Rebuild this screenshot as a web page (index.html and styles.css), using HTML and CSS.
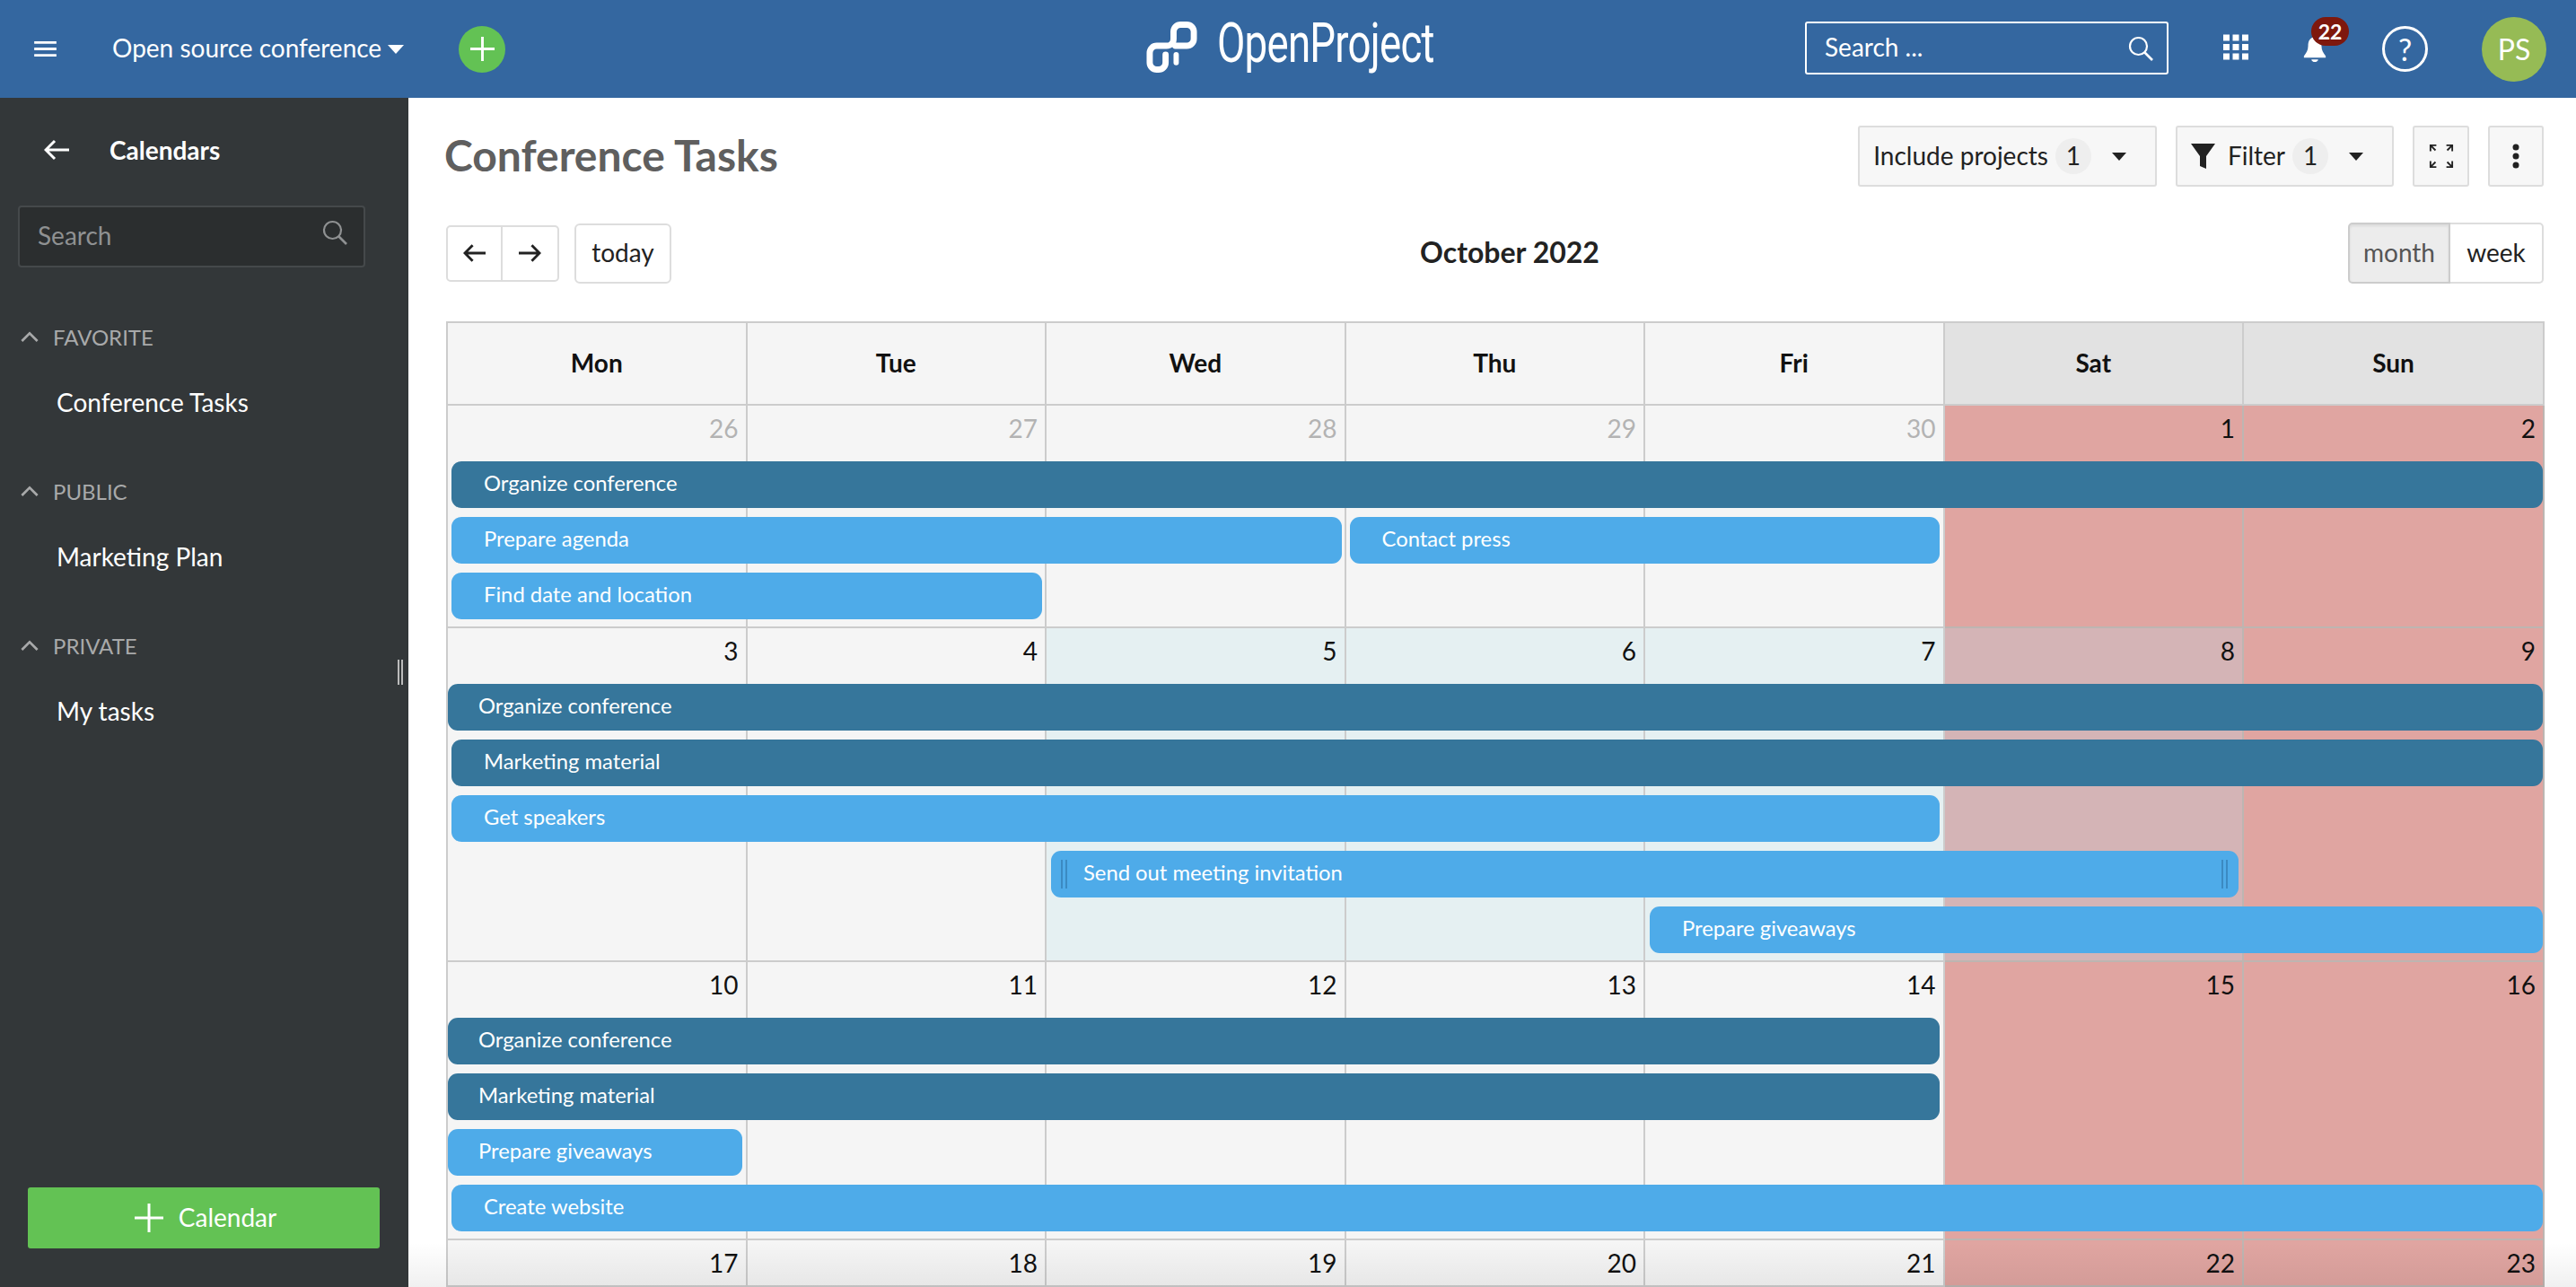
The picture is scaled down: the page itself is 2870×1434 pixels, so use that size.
FILE: index.html
```html
<!DOCTYPE html>
<html lang="en">
<head>
<meta charset="utf-8">
<title>Conference Tasks</title>
<link rel="stylesheet" href="styles.css">
</head>
<body>
<header class="topbar">
  <div class="top-left">
    <svg class="hamburger" viewBox="0 0 26 20"><path d="M0 2.500h26M0 10h26M0 17.500h26" stroke="#fff" stroke-width="3"/></svg>
    <span class="project">Open source conference</span>
    <span class="caret-white"></span>
    <span class="add-circle"><svg viewBox="0 0 30 30"><path d="M15 1v28M1 15h28" stroke="#fff" stroke-width="3"/></svg></span>
  </div>
  <div class="logo">
    <svg class="logo-mark" viewBox="0 0 58 59"><path d="M33 28H46a8 8 0 0 0 8-8V12a8 8 0 0 0-8-8h-7a8 8 0 0 0-8 8V20c0 5-3 8-8 8H12a8 8 0 0 0-8 8v11a8 8 0 0 0 8 8h2a8 8 0 0 0 8-8V38" fill="none" stroke="#fff" stroke-width="7" stroke-linecap="round"/><path d="M34 38v9" stroke="#fff" stroke-width="6" stroke-linecap="round"/></svg>
    <span class="logo-text">OpenProject</span>
  </div>
  <div class="top-right">
    <div class="global-search"><span>Search ...</span>
      <svg class="search-ico" viewBox="0 0 28 28"><circle cx="11.500" cy="11.500" r="9.500" fill="none" stroke="currentColor" stroke-width="2.200"/><path d="M18 18l9 9" stroke="currentColor" stroke-width="2.600"/></svg>
    </div>
    <svg class="grid-ico" viewBox="0 0 28 28"><path fill="#fff" d="M0 0h7v7H0zM10.500 0h7v7h-7zM21 0h7v7h-7zM0 10.500h7v7H0zM10.500 10.500h7v7h-7zM21 10.500h7v7h-7zM0 21h7v7H0zM10.500 21h7v7h-7zM21 21h7v7h-7z"/></svg>
    <div class="bell-wrap">
      <svg class="bell" viewBox="0 0 28 30"><path fill="#fff" d="M14 0c-6 1-8 5-8 11 0 5-2 8-5 12v2h26v-2c-3-4-5-7-5-12 0-6-2-10-8-11zM10 27h8c0 2-2 3-4 3s-4-1-4-3z"/></svg>
      <span class="badge">22</span>
    </div>
    <span class="help">?</span>
    <span class="avatar">PS</span>
  </div>
</header>
<div class="body-row">
  <aside class="sidebar">
    <div class="side-head">
      <svg class="back" viewBox="0 0 28 24"><path d="M12 2L2 12l10 10M2 12h26" fill="none" stroke="#fff" stroke-width="3"/></svg>
      <span class="side-title">Calendars</span>
    </div>
    <div class="side-search"><span>Search</span>
      <svg class="search-ico" viewBox="0 0 28 28"><circle cx="11.500" cy="11.500" r="9.500" fill="none" stroke="currentColor" stroke-width="2.200"/><path d="M18 18l9 9" stroke="currentColor" stroke-width="2.600"/></svg>
    </div>
    <div class="side-group">
      <div class="group-label"><svg class="chev" viewBox="0 0 22 14"><path d="M1.500 12L11 2.500 20.500 12" fill="none" stroke="currentColor" stroke-width="3"/></svg>FAVORITE</div>
      <div class="group-item">Conference Tasks</div>
    </div>
    <div class="side-group">
      <div class="group-label"><svg class="chev" viewBox="0 0 22 14"><path d="M1.500 12L11 2.500 20.500 12" fill="none" stroke="currentColor" stroke-width="3"/></svg>PUBLIC</div>
      <div class="group-item">Marketing Plan</div>
    </div>
    <div class="side-group">
      <div class="group-label"><svg class="chev" viewBox="0 0 22 14"><path d="M1.500 12L11 2.500 20.500 12" fill="none" stroke="currentColor" stroke-width="3"/></svg>PRIVATE</div>
      <div class="group-item">My tasks</div>
    </div>
    <span class="side-resize"></span>
    <div class="side-button"><svg viewBox="0 0 32 32"><path d="M16 0v32M0 16h32" stroke="#fff" stroke-width="3"/></svg><span>Calendar</span></div>
  </aside>
  <main class="main">
    <div class="title-row">
      <h1 class="page-title">Conference Tasks</h1>
      <div class="actions">
        <div class="btn"><span>Include projects</span><span class="count">1</span><span class="caret-dark"></span></div>
        <div class="btn"><svg class="funnel" viewBox="0 0 28 28"><path fill="#222" d="M0 0h27L17 14v14l-7-3V14z"/></svg><span>Filter</span><span class="count">1</span><span class="caret-dark"></span></div>
        <div class="btn square"><svg viewBox="0 0 30 30"><path d="M2 9V2h7M2 2l6 6M28 9V2h-7M28 2l-6 6M2 21v7h7M2 28l6-6M28 21v7h-7M28 28l-6-6" fill="none" stroke="#222" stroke-width="2"/></svg></div>
        <div class="btn square last"><svg class="kebab" viewBox="0 0 8 28"><circle cx="4" cy="4" r="3.500" fill="#222"/><circle cx="4" cy="14" r="3.500" fill="#222"/><circle cx="4" cy="24" r="3.500" fill="#222"/></svg></div>
      </div>
    </div>
    <div class="cal-toolbar">
      <div class="cal-left">
        <div class="btn-group">
          <div class="cal-btn"><svg viewBox="0 0 26 22"><path d="M11 2L2 11l9 9M2 11h24" fill="none" stroke="#222" stroke-width="3"/></svg></div>
          <div class="cal-btn"><svg viewBox="0 0 26 22"><path d="M15 2l9 9-9 9M24 11H0" fill="none" stroke="#222" stroke-width="3"/></svg></div>
        </div>
        <div class="cal-btn today">today</div>
      </div>
      <h2 class="cal-title">October 2022</h2>
      <div class="btn-group view">
        <div class="cal-btn active">month</div>
        <div class="cal-btn week-btn">week</div>
      </div>
    </div>
    <div class="calendar">
      <div class="head-row">
        <div class="hd">Mon</div><div class="hd">Tue</div><div class="hd">Wed</div><div class="hd">Thu</div><div class="hd">Fri</div><div class="hd we">Sat</div><div class="hd we">Sun</div>
      </div>
      <section class="week">
        <div class="cells">
          <div class="cell other">26</div><div class="cell other">27</div><div class="cell other">28</div><div class="cell other">29</div><div class="cell other">30</div><div class="cell we">1</div><div class="cell we">2</div>
        </div>
        <div class="events">
          <div class="ev dark s7 ml">Organize conference</div>
          <div class="ev light s3 ml">Prepare agenda</div>
          <div class="ev light s2 contact">Contact press</div>
          <div class="ev light s2 ml newrow">Find date and location</div>
        </div>
      </section>
      <section class="week">
        <div class="cells">
          <div class="cell">3</div><div class="cell">4</div><div class="cell hi">5</div><div class="cell hi">6</div><div class="cell hi">7</div><div class="cell we hi-we">8</div><div class="cell we">9</div>
        </div>
        <div class="events">
          <div class="ev dark s7 cont">Organize conference</div>
          <div class="ev dark s7 ml">Marketing material</div>
          <div class="ev light s5 ml">Get speakers</div>
          <div class="ev light send"><i class="grip"></i>Send out meeting invitation<i class="grip end"></i></div>
          <div class="ev light give">Prepare giveaways</div>
        </div>
      </section>
      <section class="week">
        <div class="cells">
          <div class="cell">10</div><div class="cell">11</div><div class="cell">12</div><div class="cell">13</div><div class="cell">14</div><div class="cell we">15</div><div class="cell we">16</div>
        </div>
        <div class="events">
          <div class="ev dark s5 cont">Organize conference</div>
          <div class="ev dark s5 cont">Marketing material</div>
          <div class="ev light s1 cont">Prepare giveaways</div>
          <div class="ev light s7 ml">Create website</div>
        </div>
      </section>
      <section class="week short">
        <div class="cells">
          <div class="cell">17</div><div class="cell">18</div><div class="cell">19</div><div class="cell">20</div><div class="cell">21</div><div class="cell we">22</div><div class="cell we">23</div>
        </div>
      </section>
    </div>
  </main>
</div>
</body>
</html>
```
FILE: styles.css
```css
* { box-sizing: border-box; }
html, body { margin: 0; height: 100%; overflow: hidden; }
body { font-family: Lato, "Open Sans", sans-serif; font-size: 28px; color: #222; background: #fff; display: flex; flex-direction: column; }
svg { display: block; }

.topbar { flex: 0 0 109px; background: #3467a0; display: grid; grid-template-columns: 1fr auto 1fr; align-items: center; color: #fff; }
.top-left { display: flex; align-items: center; padding-left: 38px; }
.hamburger { width: 25px; height: 19px; margin-right: 62px; }
.project { font-size: 28px; padding-bottom: 3px; }
.caret-white { width: 0; height: 0; border: 9.500px solid transparent; border-top: 10px solid #fff; border-bottom: 0; margin-left: 7px; }
.add-circle { width: 52px; height: 52px; border-radius: 50%; background: #63c254; margin-left: 61px; display: flex; align-items: center; justify-content: center; }
.add-circle svg { width: 29px; height: 29px; }
.logo { display: flex; align-items: center; gap: 22px; margin-right: 10px; }
.logo-mark { width: 57px; height: 59px; margin-top: -4px; }
.logo-text { display: block; width: 228px; white-space: nowrap; font-family: Roboto, sans-serif; font-weight: 400; font-size: 62px; line-height: 62px; letter-spacing: -1px; transform: scaleX(.735); transform-origin: left center; padding-bottom: 14px; }
.top-right { display: flex; align-items: center; justify-content: flex-end; padding-right: 33px; }
.global-search { width: 405px; height: 59px; margin-top: -2px; border: 2px solid #fff; border-radius: 3px; padding: 0 15px 0 20px; display: flex; align-items: center; justify-content: space-between; margin-right: 61px; }
.global-search span { padding-bottom: 3px; }
.global-search .search-ico { width: 28px; height: 28px; color: #fff; }
.grid-ico { width: 28px; height: 29px; margin: -4px 60px 0 0; }
.bell-wrap { position: relative; width: 28px; height: 28px; margin-right: 61px; }
.bell { width: 28px; height: 28px; }
.badge { position: absolute; left: 10px; top: -22px; width: 42px; height: 32px; border-radius: 16px; background: #7e180d; color: #fff; font-size: 23px; font-weight: 700; display: flex; align-items: center; justify-content: center; }
.help { width: 51px; height: 51px; border: 3px solid #fff; border-radius: 50%; font-size: 34px; display: flex; align-items: center; justify-content: center; margin-right: 60px; }
.avatar { width: 72px; height: 72px; border-radius: 50%; background: #96bb55; font-size: 32px; display: flex; align-items: center; justify-content: center; }

.body-row { flex: 1; display: flex; min-height: 0; }
.sidebar { position: relative; flex: 0 0 455px; background: #333739; color: #fff; display: flex; flex-direction: column; }
.side-head { display: flex; align-items: center; height: 114px; padding: 2px 0 0 49px; }
.back { width: 28px; height: 24px; margin-right: 45px; }
.side-title { font-weight: 700; }
.side-search { margin: 6px 0 61px 20px; width: 387px; height: 69px; background: #2b2e2f; border: 2px solid #45494b; border-radius: 4px; padding: 0 18px 0 20px; display: flex; align-items: center; justify-content: space-between; color: #8f9192; font-size: 28px; }
.side-search span { padding-bottom: 3px; }
.side-search .search-ico { width: 28px; height: 28px; color: #8f9192; margin-top: -9px; }
.side-group { height: 172px; flex: none; }
.group-label { display: flex; align-items: center; color: #a8a9aa; font-size: 24px; padding-left: 23px; height: 32px; }
.chev { width: 20px; height: 13px; margin-right: 16px; }
.group-item { font-size: 28px; padding: 40px 0 0 63px; }
.side-resize { position: absolute; left: 443px; top: 626px; width: 6px; height: 28px; border-left: 2px solid #bbb; border-right: 2px solid #bbb; }
.side-button { margin: auto 0 43px 31px; width: 392px; height: 68px; flex: none; background: #63c254; border-radius: 3px; display: flex; align-items: center; justify-content: center; gap: 17px; padding-left: 4px; }
.side-button span { padding-bottom: 3px; }
.side-button svg { width: 32px; height: 32px; }

.main { flex: 1; min-width: 0; padding: 0 36px 0 42px; overflow: hidden; position: relative; background: #fff; }
.main::after { content: ""; position: absolute; left: 0; right: 0; bottom: 0; height: 50px; background: linear-gradient(rgba(0,0,0,0), rgba(0,0,0,.06)); }
.title-row { display: flex; align-items: center; justify-content: space-between; height: 82px; margin-top: 24px; }
.page-title { margin: 0 0 3px -2px; font-size: 48px; font-weight: 700; color: #5f5f5f; }
.actions { display: flex; gap: 21px; }
.btn { height: 68px; background: #f7f7f7; border: 2px solid #ddd; border-radius: 3px; display: flex; align-items: center; padding: 0 16px 0 15px; }
.btn > span:first-child, .funnel + span { padding-bottom: 3px; }
.count { width: 40px; height: 40px; background: #eee; border-radius: 50%; display: flex; align-items: center; justify-content: center; margin-left: 8px; padding-bottom: 3px; }
.caret-dark { width: 0; height: 0; border: 8px solid transparent; border-top: 9px solid #222; border-bottom: 0; margin: 0 16px 0 23px; }
.funnel { width: 28px; height: 28px; margin-right: 13px; }
.btn.square { width: 63px; padding: 0; justify-content: center; }
.btn.square.last { width: 62px; }
.btn.square svg { height: 28px; width: 28px; }
.btn.square .kebab { width: 8px; }

.cal-toolbar { display: flex; align-items: center; justify-content: space-between; margin-top: 33px; height: 68px; }
.cal-left { display: flex; gap: 17px; align-items: center; }
.btn-group { display: inline-flex; }
.cal-btn { height: 68px; background: #fff; border: 2px solid #ddd; border-radius: 6px; display: flex; align-items: center; justify-content: center; padding-bottom: 3px; }
.btn-group .cal-btn:first-child { border-radius: 5px 0 0 5px; }
.btn-group .cal-btn + .cal-btn { border-left: 0; border-radius: 0 5px 5px 0; }
.cal-left .btn-group .cal-btn { width: 63px; height: 63px; padding-bottom: 0; }
.cal-left .btn-group .cal-btn svg { width: 25px; height: 22px; }
.cal-btn.today { width: 108px; height: 67px; }
.cal-title { margin: 0 0 3px; font-size: 32px; font-weight: 700; color: #222; }
.cal-btn.active { width: 114px; background: #ececec; border-color: #ccc; color: #555; box-shadow: inset 0 2px 3px rgba(0,0,0,.08); }
.week-btn { width: 104px; }

.calendar { --cols: repeat(6, 333.5px) 1fr; margin-top: 42px; width: 2338px; border-left: 2px solid #ccc; }
.head-row { display: grid; grid-template-columns: var(--cols); height: 94px; border-top: 2px solid #ccc; border-bottom: 2px solid #ccc; }
.hd { background: #f5f5f5; border-right: 2px solid #ccc; display: flex; align-items: center; justify-content: center; font-weight: 700; color: #111; padding-bottom: 3px; }
.hd.we { background: #e2e2e2; }
.week { position: relative; padding: 62px 0 10px; }
.week.short { height: 52px; padding: 0; }
.cells { position: absolute; inset: 0; display: grid; grid-template-columns: var(--cols); }
.cell { background: #f5f5f5; border-right: 2px solid #ccc; border-bottom: 2px solid #ccc; text-align: right; padding: 7px 8px 0 0; color: #111; line-height: 36px; }
.cell.other { color: #b3b3b3; }
.cell.hi { background: #e5f0f2; }
.cell.we { background: #e0a5a1; border-color: #bdb5b1; }
.cell.hi-we { background: #d4b4b6; }
.events { position: relative; display: grid; grid-template-columns: var(--cols); grid-auto-rows: 52px; row-gap: 10px; }
.ev { border-radius: 11px; color: #fff; font-size: 23.800px; display: flex; align-items: center; padding: 0 0 5px 36px; margin-right: 2px; white-space: nowrap; overflow: hidden; position: relative; }
.dark { background: #36769b; }
.light { background: #4eabe9; }
.s1 { grid-column: 1 / span 1; margin-right: 6px; }
.s2 { grid-column: span 2; margin-right: 5px; }
.s3 { grid-column: span 3; margin-right: 5px; }
.s5 { grid-column: 1 / span 5; margin-right: 6px; }
.s7 { grid-column: 1 / span 7; }
.ml { margin-left: 4px; }
.cont { margin-left: 0; padding-left: 34px; }
.contact { margin-left: 4px; margin-right: 6px; }
.newrow { grid-column: 1 / span 2; }
.send { grid-column: 3 / span 4; grid-row: 4; margin-left: 5px; margin-right: 6px; }
.give { grid-column: 5 / span 3; grid-row: 5; margin-left: 5px; }
.grip { position: absolute; left: 11px; top: 10px; height: 32px; width: 7px; border-left: 2px solid #3b8ac2; border-right: 2px solid #3b8ac2; }
.grip.end { left: auto; right: 12px; }
```
